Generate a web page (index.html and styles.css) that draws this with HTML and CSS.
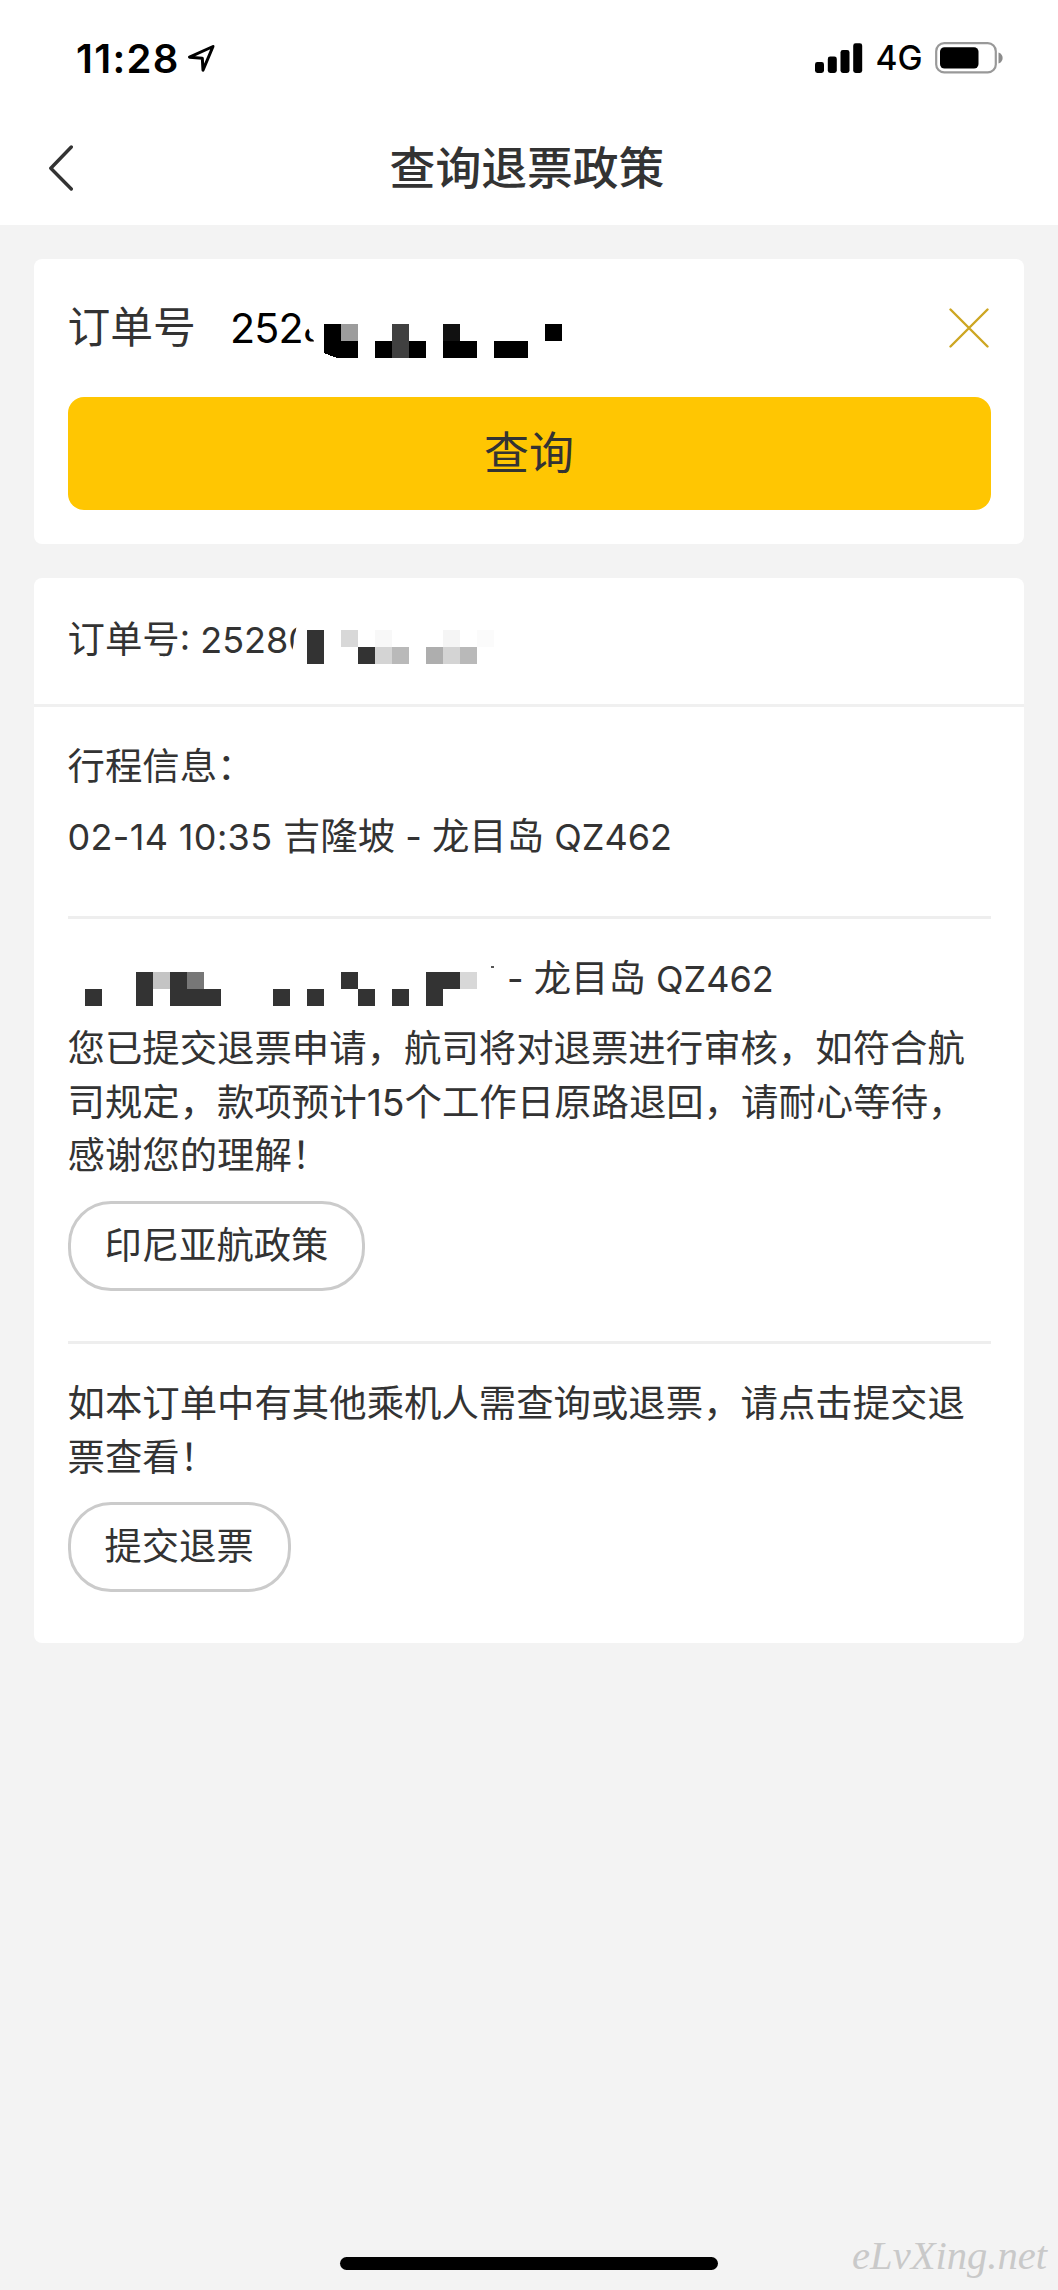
FILE: index.html
```html
<!DOCTYPE html>
<html lang="zh-CN">
<head>
<meta charset="utf-8">
<meta name="viewport" content="width=device-width, initial-scale=1">
<title>查询退票政策</title>
<link rel="stylesheet" href="styles.css">
</head>
<body>
<div class="screen">
  <header class="top">
    <div class="status">
      <div class="status-left">
        <span class="time">11:28</span>
        <svg class="locate" width="29" height="29" viewBox="0 0 29 29"><path d="M26 2.5 L2.5 13.2 L15.3 14.2 L16 26.2 Z" fill="none" stroke="#000" stroke-width="3" stroke-linejoin="round"/></svg>
      </div>
      <div class="status-right">
        <svg width="48" height="30" viewBox="0 0 48 30"><rect x="0" y="19" width="9" height="11" rx="2.4"/><rect x="12.8" y="13.5" width="9" height="16.5" rx="2.4"/><rect x="25.5" y="7" width="9" height="23" rx="2.4"/><rect x="38.2" y="0.3" width="9" height="29.7" rx="2.4"/></svg>
        <span class="network">4G</span>
        <svg class="battery" width="69" height="32" viewBox="0 0 69 32"><rect x="1.2" y="1.2" width="59.6" height="29.2" rx="8" fill="none" stroke="#999" stroke-width="2.2"/><rect x="5" y="5.2" width="38.5" height="21.4" rx="4.5"/><path d="M63.5 10.5 C69 12 69 20 63.5 21.5 Z" fill="#8c8c8c"/></svg>
      </div>
    </div>
    <nav class="nav">
      <svg class="back" width="26" height="46" viewBox="0 0 26 46"><path d="M23.3 2 L2.8 23.3 L23.3 44" fill="none" stroke="#333" stroke-width="3.4" stroke-linecap="round" stroke-linejoin="round"/></svg>
      <h1 class="title">查询退票政策</h1>
    </nav>
  </header>

  <main class="content">
    <section class="card search">
      <div class="field">
        <span class="label">订单号</span>
        <span class="value">252<span class="sliver-8">8</span></span>
        <svg class="mosaic" width="238" height="34" viewBox="0 0 238 34" shape-rendering="crispEdges"><path d="M0 0h17v17h17v17H13L0 29Z"/><path fill="#9c9c9c" d="M17 0h17v17H17z"/><path d="M51 17h17v17H51zM85 17h17v17H85z"/><path fill="#404040" d="M68 0h17v34H68z"/><path fill="#111" d="M119 0h17v17h-17z"/><path d="M119 17h34v17h-34zM170 17h34v17h-34zM221 0h17v17h-17z"/></svg>
        <svg class="clear" width="40" height="40" viewBox="0 0 40 40"><path d="M1.5 1.5 L38.5 38.5 M38.5 1.5 L1.5 38.5" fill="none" stroke="#cda622" stroke-width="2.4" stroke-linecap="round"/></svg>
      </div>
      <button class="submit">查询</button>
    </section>

    <section class="card result">
      <div class="order">
        <span class="order-text">订单号<span class="lat">: 2528<span class="sliver-0">0</span></span></span>
        <svg class="mosaic" width="187" height="34" viewBox="0 0 187 34" shape-rendering="crispEdges"><path fill="#333" d="M0 0h17v34H0zM51 17h17v17H51z"/><path fill="#d8d8d8" d="M34 0h17v17H34z"/><path fill="#f8f8f8" d="M68 0h17v17H68z"/><path fill="#d4d4d4" d="M68 17h17v17H68zM136 17h17v17h-17z"/><path fill="#b9b9b9" d="M85 17h17v17H85zM153 17h17v17h-17z"/><path fill="#aeaeae" d="M119 17h17v17h-17z"/><path fill="#f5f5f5" d="M136 0h17v17h-17z"/><path fill="#fbfbfb" d="M170 0h17v17h-17z"/></svg>
      </div>
      <div class="block trip">
        <p class="line">行程信息：</p>
        <p class="line"><span class="lat date">02-14 10:35 </span>吉隆坡<span class="lat"> - </span>龙目岛<span class="lat"> QZ462</span></p>
      </div>
      <div class="block passenger">
        <div class="line hidden-line">
          <svg class="mosaic" width="410" height="40" viewBox="0 0 410 40" shape-rendering="crispEdges"><path fill="#333" d="M0 23h17v17H0zM51 6h17v34H51zM85 6h17v17h34v17H85zM188 23h17v17h-17zM222 23h17v17h-17zM256 6h17v17h-17zM273 23h17v17h-17zM307 23h17v17h-17zM341 6h34v17h-17v17h-17z"/><path fill="#c4c4c4" d="M68 6h17v17H68z"/><path fill="#777" d="M102 6h17v17h-17z"/><path fill="#d8d8d8" d="M375 6h17v17h-17z"/><path fill="#555" d="M406 0h3v2h-3z"/></svg>
          <span><span class="lat">- </span>龙目岛<span class="lat"> QZ462</span></span>
        </div>
        <p class="para">您已提交退票申请，航司将对退票进行审核，如符合航司规定，款项预计15个工作日原路退回，请耐心等待，感谢您的理解！</p>
        <button class="pill">印尼亚航政策</button>
      </div>
      <div class="block more">
        <p class="para">如本订单中有其他乘机人需查询或退票，请点击提交退票查看！</p>
        <button class="pill">提交退票</button>
      </div>
    </section>
  </main>

  <footer class="foot">
    <div class="home-bar"></div>
    <span class="watermark">eLvXing.net</span>
  </footer>
</div>
</body>
</html>
```
FILE: styles.css
```css
* {
  box-sizing: border-box;
}

body {
  margin: 0;
  background: #f3f3f3;
  color: #333;
  font-family: Inter, "Noto Sans CJK SC", sans-serif;
  font-size: 37.4px;
}

h1,
p {
  margin: 0;
  font-weight: 400;
}

button {
  display: block;
  color: inherit;
  font-family: inherit;
}

svg {
  display: block;
  flex: none;
}

.screen {
  display: flex;
  flex-direction: column;
  height: 2290px;
}

.top {
  height: 225px;
  background: #fff;
}

.status {
  display: flex;
  justify-content: space-between;
  align-items: center;
  height: 112px;
  padding: 4px 54px 0 76px;
  color: #000;
}

.status-left,
.status-right {
  display: flex;
  align-items: center;
}

.time {
  font-size: 40px;
  font-weight: 600;
  letter-spacing: 1.3px;
}

.locate {
  margin-left: 7px;
}

.network {
  margin-left: 12px;
  font-size: 33.5px;
  font-weight: 450;
}

.battery {
  margin-left: 12.5px;
}

.nav {
  display: grid;
  grid-template-columns: 1fr auto 1fr;
  align-items: center;
  height: 113px;
  padding: 0 52px 0 48px;
}

.back {
  margin-top: -1px;
}

.title {
  font-size: 45.8px;
  font-weight: 500;
  line-height: 110px;
}

.content {
  display: flex;
  flex-direction: column;
  gap: 34px;
  padding: 34px 34px 0;
}

.card {
  border-radius: 8px;
  background: #fff;
}

.search {
  height: 284.5px;
  padding: 0 33.5px;
}

.field {
  display: flex;
  align-items: center;
  height: 138px;
  padding-bottom: 1px;
  color: #000;
}

.label {
  padding-bottom: 8px;
  color: #333;
  font-size: 42.8px;
}

.value {
  width: 94px;
  margin-left: 34px;
  font-size: 41.2px;
  letter-spacing: -0.8px;
  white-space: nowrap;
}

.mosaic {
  overflow: visible;
}

.field .mosaic {
  margin-top: 27px;
}

.clear {
  margin: 0 1.5px 0 auto;
}

.sliver-8 {
  display: inline-block;
  clip-path: polygon(0 50%, 20% 50%, 46% 78%, 0 78%);
}

.sliver-0 {
  display: inline-block;
  clip-path: polygon(0 15%, 38% 15%, 18% 75%, 0 75%);
}

.lat {
  font-size: 36px;
}

.date {
  letter-spacing: 0.35px;
}

.submit {
  width: 100%;
  height: 112.5px;
  padding: 0 0 6px;
  border: 0;
  border-radius: 16px;
  background: #ffc602;
  font-size: 45px;
}

.result {
  height: 1065px;
}

.order {
  display: flex;
  align-items: center;
  height: 129.5px;
  padding: 0 33.5px 8px;
  border-bottom: 3px solid #f0f0f0;
}

.order-text {
  width: 239px;
  white-space: nowrap;
}

.order .mosaic {
  margin: 20px 0 0;
}

.block {
  margin: 0 33.5px;
}

.line {
  height: 70px;
  line-height: 70px;
  white-space: pre;
}

.trip {
  height: 211.5px;
  padding-top: 25px;
  border-bottom: 3px solid #eee;
}

.passenger {
  height: 425px;
  padding-top: 25px;
  border-bottom: 3px solid #eee;
}

.hidden-line {
  display: flex;
  align-items: center;
  gap: 12px;
  padding-left: 17.5px;
}

.hidden-line .mosaic {
  margin-top: 14px;
}

.para {
  margin-top: 8.5px;
  line-height: 53.67px;
}

.more {
  padding-top: 25px;
}

.pill {
  height: 90px;
  margin-top: 18px;
  padding: 0 34px 6px;
  border: 3px solid #cbcbcb;
  border-radius: 43px;
  background: #fff;
  font-size: 37.3px;
}

.foot {
  display: grid;
  grid-template-columns: 1fr 378px 1fr;
  align-items: end;
  margin-top: auto;
  height: 60px;
}

.home-bar {
  grid-column: 2;
  height: 13px;
  margin-bottom: 20.5px;
  border-radius: 7px;
  background: #000;
}

.watermark {
  justify-self: end;
  margin: 0 11px 14px 0;
  color: #c9c9c9;
  font-family: "Liberation Serif", serif;
  font-size: 40.6px;
  font-style: italic;
  line-height: 40px;
}
```
